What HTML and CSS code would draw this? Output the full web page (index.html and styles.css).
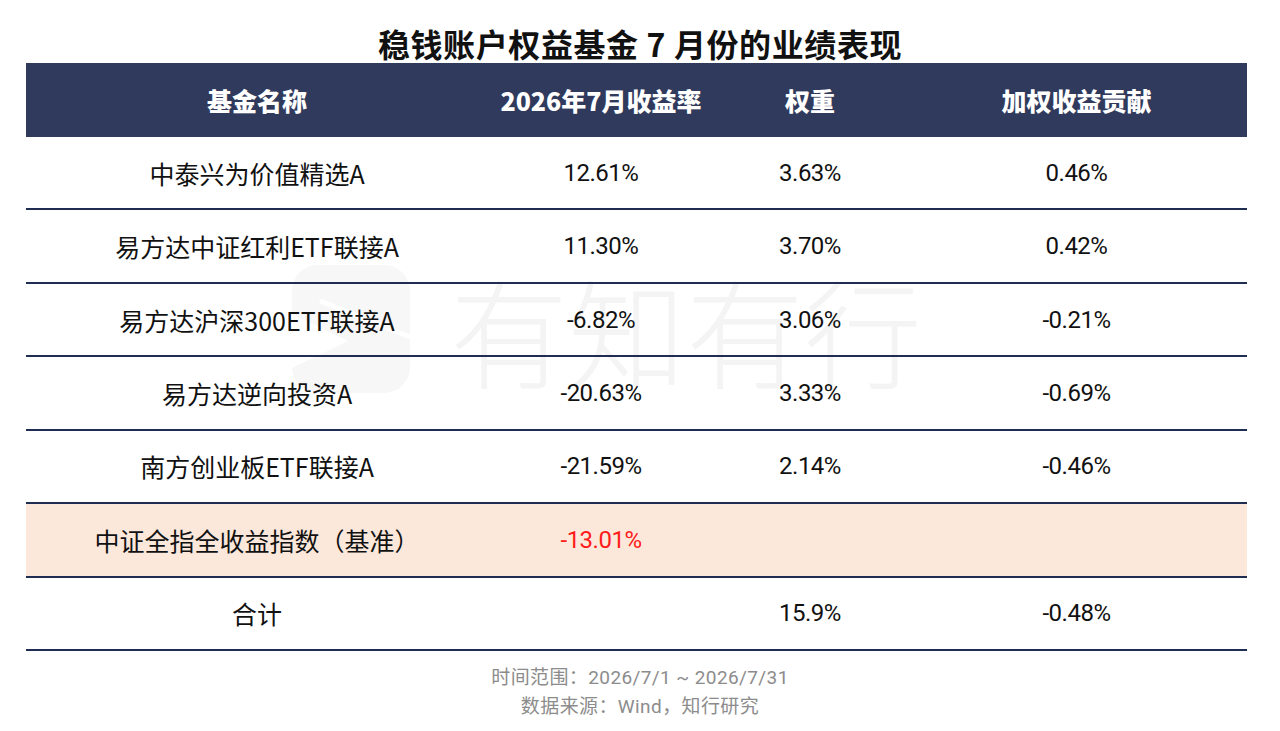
FILE: index.html
```html
<!DOCTYPE html>
<html lang="zh-CN">
<head>
<meta charset="utf-8">
<title>稳钱账户权益基金 7 月份的业绩表现</title>
<link rel="stylesheet" href="styles.css">
</head>
<body>
<div class="page">
  <h1 class="title">稳钱账户权益基金 7 月份的业绩表现</h1>
  <div class="table-wrap">
    <table class="perf">
      <colgroup>
        <col class="c1"><col class="c2"><col class="c3"><col class="c4">
      </colgroup>
      <thead>
        <tr><th>基金名称</th><th>2026年7月收益率</th><th>权重</th><th>加权收益贡献</th></tr>
      </thead>
      <tbody>
        <tr><td>中泰兴为价值精选A</td><td class="num">12.61%</td><td class="num">3.63%</td><td class="num">0.46%</td></tr>
        <tr><td>易方达中证红利ETF联接A</td><td class="num">11.30%</td><td class="num">3.70%</td><td class="num">0.42%</td></tr>
        <tr><td>易方达沪深300ETF联接A</td><td class="num">-6.82%</td><td class="num">3.06%</td><td class="num">-0.21%</td></tr>
        <tr><td>易方达逆向投资A</td><td class="num">-20.63%</td><td class="num">3.33%</td><td class="num">-0.69%</td></tr>
        <tr><td>南方创业板ETF联接A</td><td class="num">-21.59%</td><td class="num">2.14%</td><td class="num">-0.46%</td></tr>
        <tr class="bench"><td>中证全指全收益指数（基准）</td><td class="num red">-13.01%</td><td></td><td></td></tr>
        <tr><td>合计</td><td></td><td class="num">15.9%</td><td class="num">-0.48%</td></tr>
      </tbody>
    </table>
    <div class="watermark" aria-hidden="true">
      <svg class="wm-logo" width="124" height="132" viewBox="0 0 124 132">
        <rect x="2" y="2" width="118" height="128" rx="26" fill="#f7f7f7"/>
        <path d="M0 50 L58 78 L0 106 Z" fill="#ffffff"/>
        <path d="M30 38 L120 74" stroke="#ffffff" stroke-width="5"/>
      </svg>
      <span class="wm-text">有知有行</span>
    </div>
  </div>
  <div class="footer">
    <p>时间范围：2026/7/1 ~ 2026/7/31</p>
    <p>数据来源：Wind，知行研究</p>
  </div>
</div>
</body>
</html>
```
FILE: styles.css
```css
html, body {
  margin: 0;
  padding: 0;
  background: #ffffff;
}
body {
  font-family: "Noto Sans CJK SC", "Noto Sans", sans-serif;
  color: #111111;
}
.page {
  width: 1280px;
  height: 731px;
  overflow: hidden;
}
.title {
  margin: 0;
  padding-top: 24px;
  height: 39px;
  line-height: 38px;
  font-size: 32px;
  font-weight: 700;
  text-align: center;
  letter-spacing: 0.6px;
  color: #111111;
}
.table-wrap {
  position: relative;
  margin: 0 33px 0 26px;
}
.perf {
  position: relative;
  z-index: 1;
  width: 1221px;
  border-collapse: collapse;
  table-layout: fixed;
}
.c1 { width: 462px; }
.c2 { width: 226px; }
.c3 { width: 192px; }
.c4 { width: 341px; }
.perf th {
  background: #303a5c;
  color: #ffffff;
  height: 74px;
  padding: 0;
  font-size: 25px;
  font-weight: 900;
  text-align: center;
}
.perf td {
  height: 71.45px;
  padding: 0;
  text-align: center;
  font-size: 25px;
  font-weight: 400;
  color: #111111;
  border-bottom: 2px solid #1f2d52;
}
.perf td.num {
  font-family: "Roboto", "Noto Sans", sans-serif;
  font-size: 24px;
  letter-spacing: -0.5px;
}
.perf tr.bench td {
  background: #fbe8db;
}
.perf td.red {
  color: #ff1a1a;
}
.watermark {
  position: absolute;
  z-index: 0;
  left: 264px;
  top: 200px;
  display: flex;
  align-items: center;
  gap: 36px;
}
.wm-text {
  font-size: 118px;
  font-weight: 300;
  color: #f4f4f4;
  line-height: 1;
}
.footer {
  padding-top: 12px;
  text-align: center;
  color: #8c8c8c;
  font-family: "Roboto", "Noto Sans CJK SC", sans-serif;
  font-size: 19px;
  letter-spacing: 0.4px;
  line-height: 29px;
}
.footer p {
  margin: 0;
}
```
